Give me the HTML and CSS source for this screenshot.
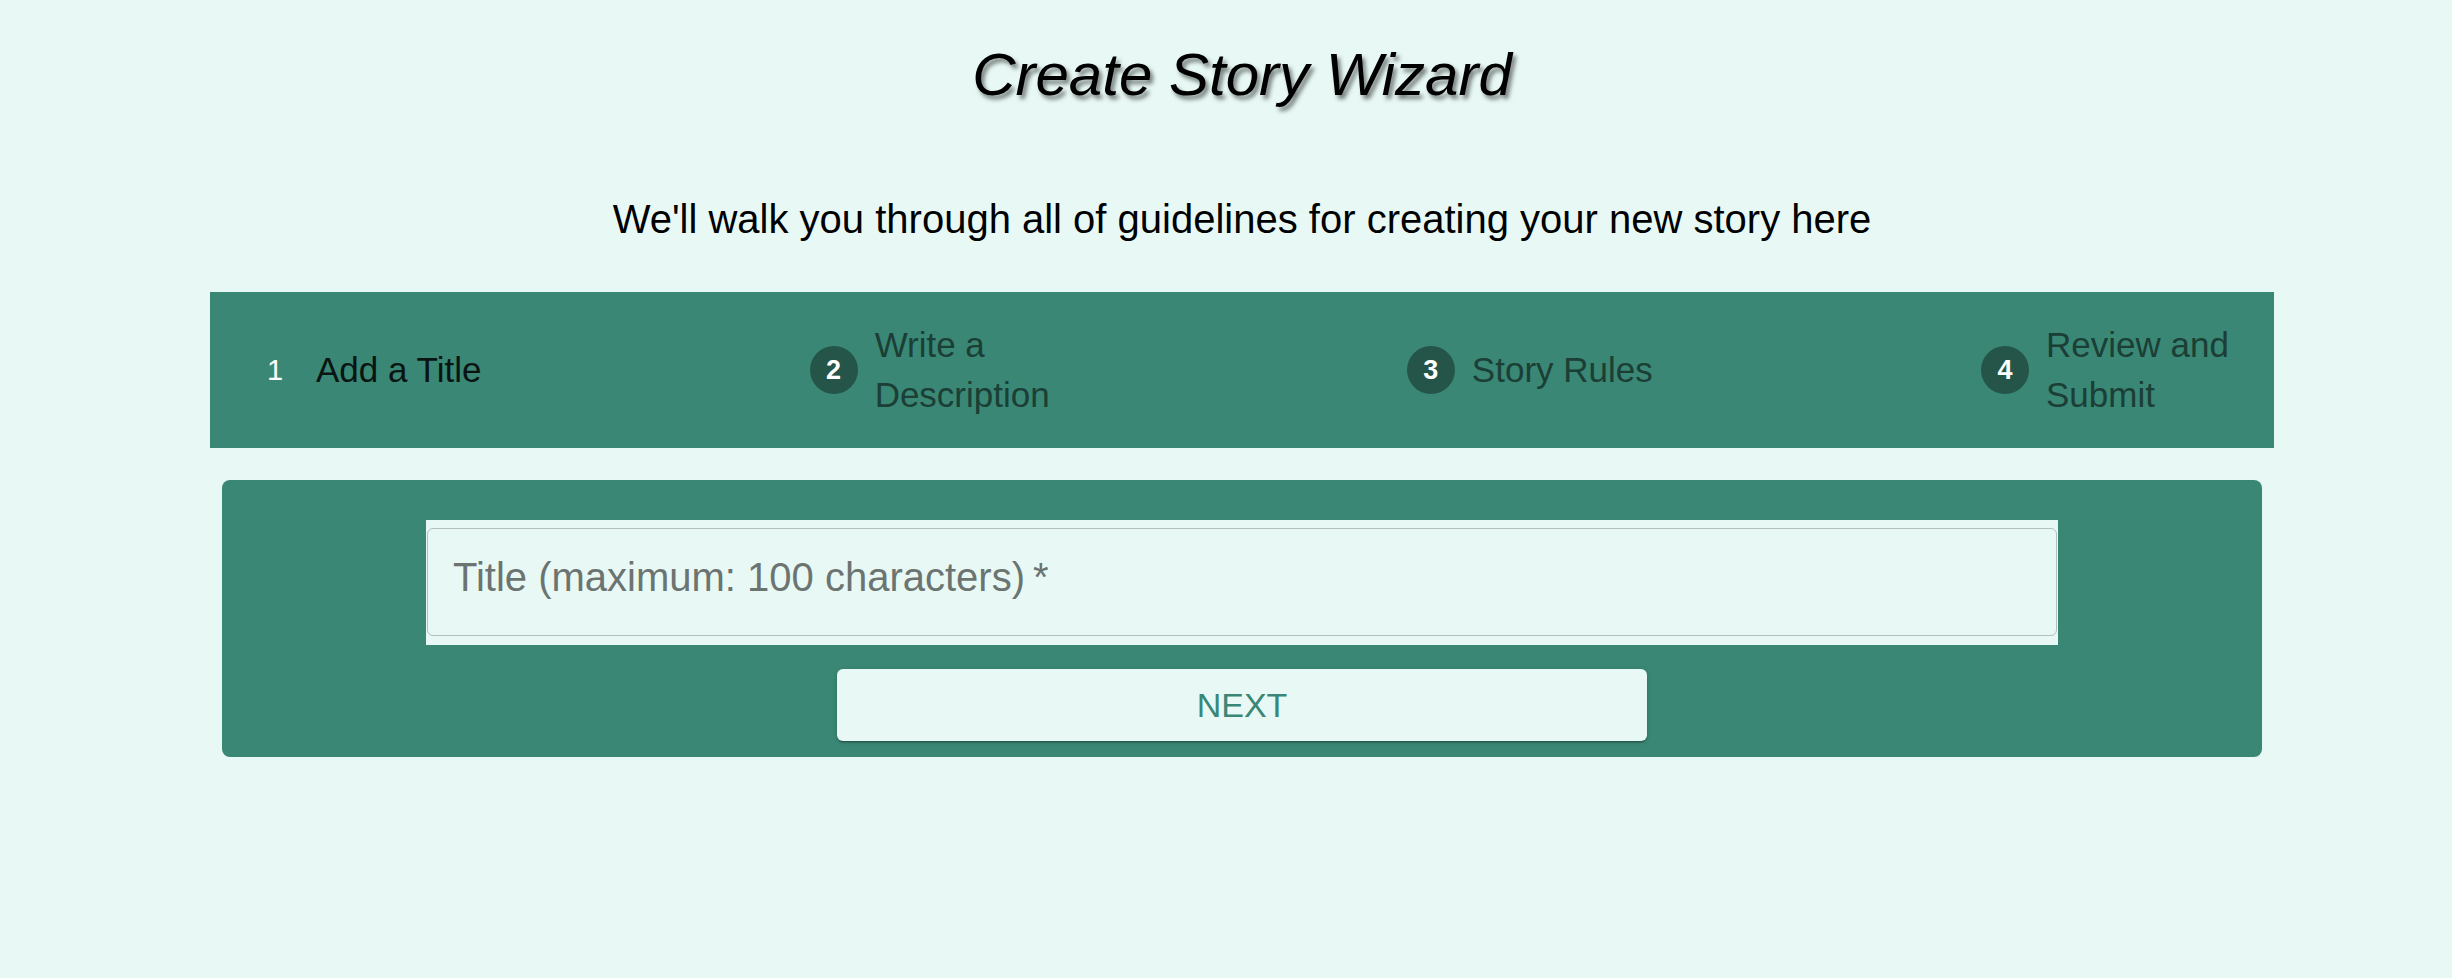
FILE: index.html
```html
<!DOCTYPE html>
<html lang="en">
<head>
<meta charset="utf-8">
<title>Create Story Wizard</title>
<link rel="stylesheet" href="styles.css">
</head>
<body>
<main class="page">
  <h1 class="title">Create Story Wizard</h1>
  <p class="subtitle">We'll walk you through all of guidelines for creating your new story here</p>
  <ol class="stepper">
    <li class="step step-active">
      <span class="step-icon">1</span>
      <span class="step-label">Add a Title</span>
    </li>
    <li class="step">
      <span class="step-icon">2</span>
      <span class="step-label">Write a Description</span>
    </li>
    <li class="step">
      <span class="step-icon">3</span>
      <span class="step-label">Story Rules</span>
    </li>
    <li class="step">
      <span class="step-icon">4</span>
      <span class="step-label">Review and Submit</span>
    </li>
  </ol>
  <section class="card">
    <div class="field-wrap">
      <label class="field" for="title-input">
        <span class="field-label">Title (maximum: 100 characters)&thinsp;*</span>
      </label>
    </div>
    <button class="next-btn" type="button">NEXT</button>
  </section>
</main>
</body>
</html>
```

FILE: styles.css
```css
html, body {
  margin: 0;
  padding: 0;
  background: #e8f9f5;
}

body {
  font-family: "Liberation Sans", Arial, Helvetica, sans-serif;
  color: #000;
}

.page {
  margin: 0 178px 0 210px;
  display: flex;
  flex-direction: column;
}

.title {
  margin: 39px 0 0;
  font-size: 60px;
  line-height: 72px;
  font-weight: 400;
  font-style: italic;
  text-align: center;
  text-shadow: 3px 4px 4px rgba(0, 0, 0, 0.5);
}

.subtitle {
  margin: 84px 0 0;
  font-size: 40px;
  line-height: 48px;
  text-align: center;
}

.stepper {
  list-style: none;
  margin: 49px 0 0;
  padding: 0 24px 0 41px;
  height: 156px;
  box-sizing: border-box;
  background: #3a8775;
  display: flex;
  align-items: center;
  justify-content: space-between;
}

.step {
  display: flex;
  align-items: center;
  gap: 17px;
}

.step-icon {
  flex: none;
  width: 48px;
  height: 48px;
  border-radius: 50%;
  background: #245548;
  color: #fff;
  font-size: 27px;
  font-weight: 700;
  line-height: 48px;
  text-align: center;
}

.step-active .step-icon {
  background: #3a8775;
  font-weight: 400;
  font-size: 29px;
}

.step-label {
  max-width: 204px;
  font-size: 35px;
  line-height: 50px;
  color: #1b3e35;
}

.step-active .step-label {
  color: #0a1411;
}

.card {
  margin: 32px 12px 0;
  padding: 40px 0 16px;
  background: #3a8775;
  border-radius: 8px;
  display: flex;
  flex-direction: column;
  align-items: center;
}

.field-wrap {
  width: 80%;
  box-sizing: border-box;
  padding: 8px 1px 9px;
  background: #e8f9f5;
}

.field {
  display: block;
  height: 108px;
  box-sizing: border-box;
  border: 1.5px solid #b4bfbc;
  border-radius: 6px;
  padding: 24px 25px 0;
}

.field-label {
  display: block;
  font-size: 40px;
  line-height: 48px;
  color: #6c7471;
}

.next-btn {
  margin-top: 24px;
  width: 810px;
  height: 72px;
  border: none;
  border-radius: 6px;
  background: #e8f9f5;
  color: #3a8775;
  font-family: "Liberation Sans", Arial, Helvetica, sans-serif;
  font-size: 34px;
  line-height: 40px;
  box-shadow: 0 3px 1px -2px rgba(0, 0, 0, 0.2), 0 2px 2px 0 rgba(0, 0, 0, 0.14), 0 1px 5px 0 rgba(0, 0, 0, 0.12);
  cursor: pointer;
}
```
